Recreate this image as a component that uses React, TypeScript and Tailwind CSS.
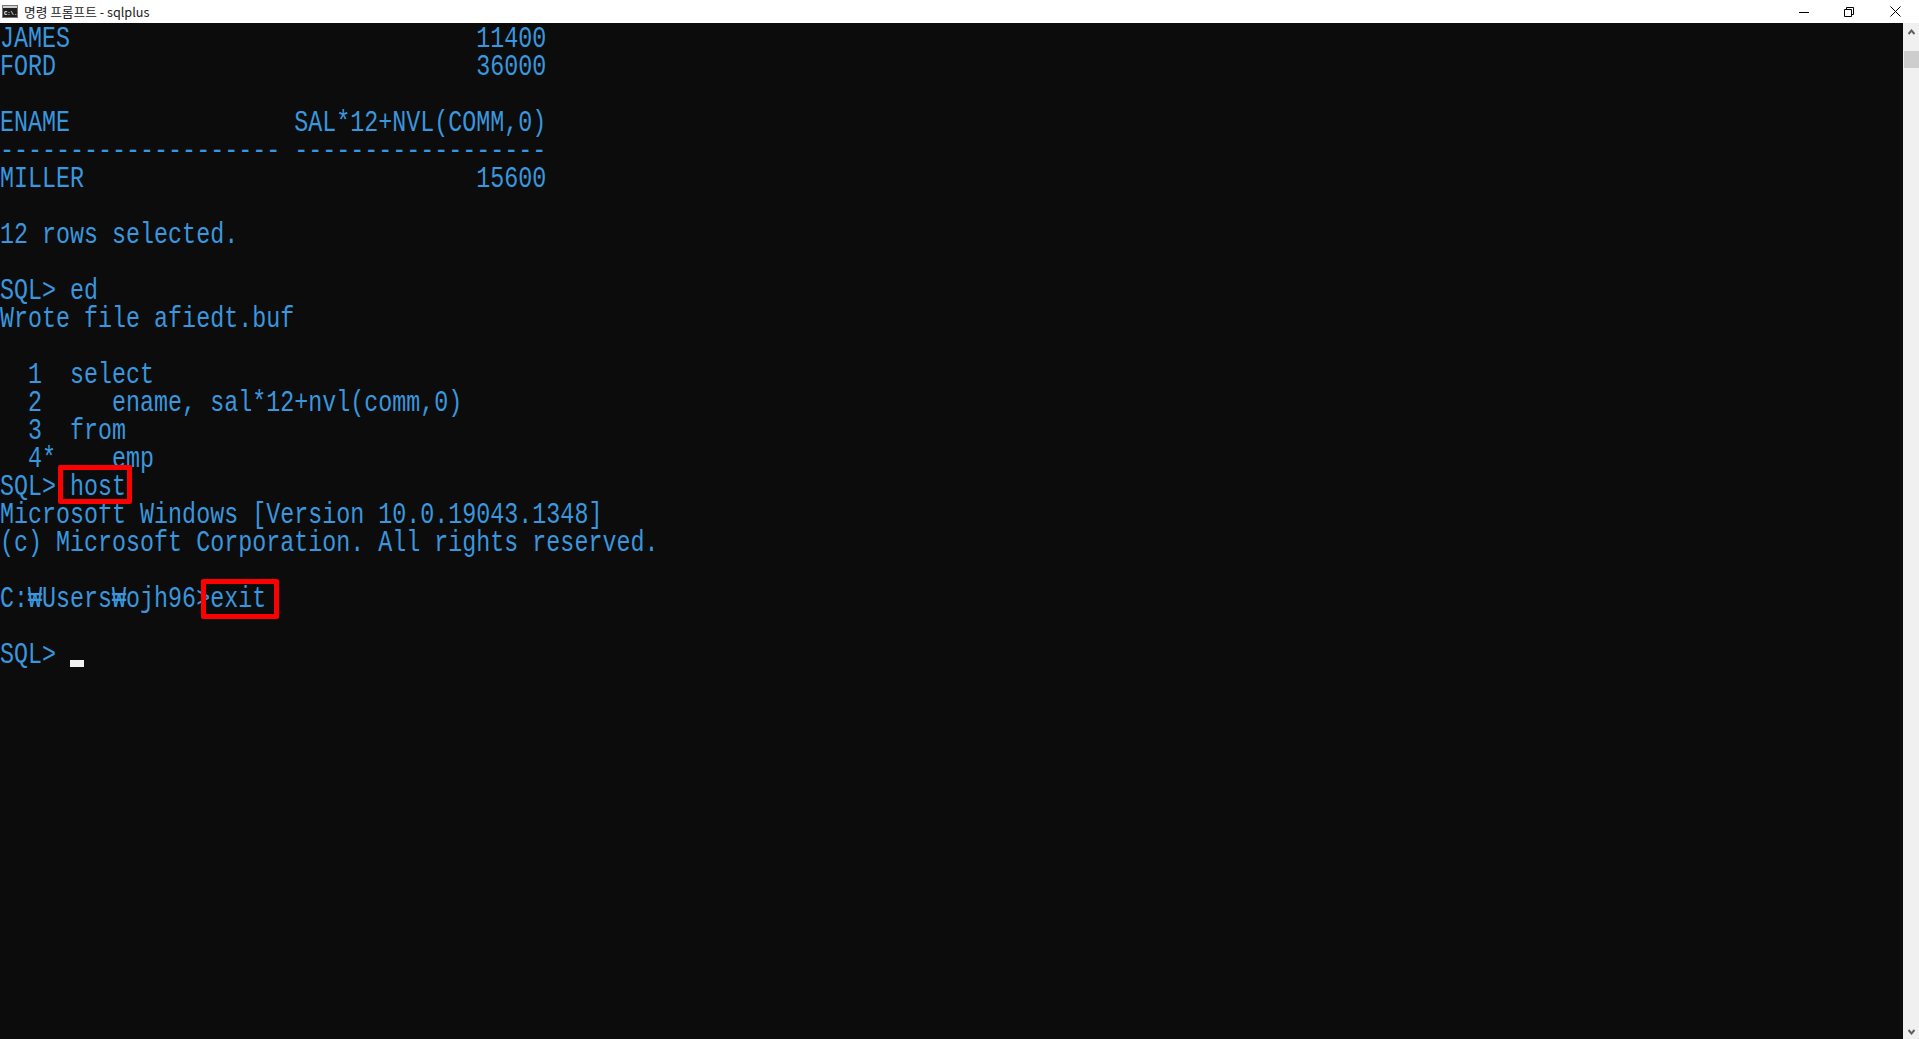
const lines = [
  'JAMES                             11400',
  'FORD                              36000',
  '',
  'ENAME                SAL*12+NVL(COMM,0)',
  '-------------------- ------------------',
  'MILLER                            15600',
  '',
  '12 rows selected.',
  '',
  'SQL> ed',
  'Wrote file afiedt.buf',
  '',
  '  1  select',
  '  2     ename, sal*12+nvl(comm,0)',
  '  3  from',
  '  4*    emp',
  'SQL> host',
  'Microsoft Windows [Version 10.0.19043.1348]',
  '(c) Microsoft Corporation. All rights reserved.',
  '',
  'C:₩Users₩ojh96>exit',
  '',
  'SQL> ',
]

function TitleBar() {
  return (
    <div className="flex h-[23px] items-center bg-white text-black">
      <svg width="16" height="13" viewBox="0 0 16 13" className="ml-[2px]" aria-hidden="true">
        <rect x="0.5" y="0.5" width="15" height="12" fill="#1e1e1e" stroke="#777" />
        <rect x="1" y="1" width="14" height="2" fill="#cfcfcf" />
        <text x="2" y="10" fontSize="5.5" fontWeight="700" fill="#fff" fontFamily="'Liberation Mono', monospace">C:\.</text>
      </svg>
      <span className="ml-[6px] text-[12.7px] leading-[23px] text-[#222] font-['Noto_Sans_CJK_KR',sans-serif]">명령 프롬프트 - sqlplus</span>
      <div className="ml-auto flex h-full items-center">
        <svg width="10" height="10" viewBox="0 0 10 10" className="mr-[35px]" aria-hidden="true">
          <path d="M0 5.5H10" stroke="#000" />
        </svg>
        <svg width="10" height="10" viewBox="0 0 10 10" className="mr-[36px]" aria-hidden="true">
          <path d="M0.5 2.5H7.5V9.5H0.5ZM2.5 2.5V0.5H9.5V7.5H7.5" fill="none" stroke="#000" />
        </svg>
        <svg width="11" height="11" viewBox="0 0 11 11" className="mr-[18px]" aria-hidden="true">
          <path d="M0.5 0.5L10.5 10.5M10.5 0.5L0.5 10.5" stroke="#000" />
        </svg>
      </div>
    </div>
  )
}

function Scrollbar() {
  return (
    <div className="flex w-4 flex-col items-center bg-[#f0f0f0]">
      <svg width="7" height="6" viewBox="0 0 7 6" className="mt-[6px]" aria-hidden="true">
        <path d="M0.5 5L3.5 1.5L6.5 5" fill="none" stroke="#606060" strokeWidth="2" />
      </svg>
      <div className="mt-[16px] h-[17px] w-[15px] self-end bg-[#cdcdcd]" />
      <svg width="7" height="6" viewBox="0 0 7 6" className="mt-auto mb-[4px]" aria-hidden="true">
        <path d="M0.5 1L3.5 4.5L6.5 1" fill="none" stroke="#606060" strokeWidth="2" />
      </svg>
    </div>
  )
}

export default function App() {
  return (
    <div className="flex h-screen flex-col overflow-hidden bg-[#0c0c0c]">
      <TitleBar />
      <div className="flex flex-1">
        <main className="relative flex-1 overflow-hidden pt-[3px]">
          {/* glyphs are taller than a normal mono font, so squeeze the line sideways */}
          <div className="scale-x-[0.805] whitespace-pre font-['Liberation_Mono','Noto_Sans_CJK_KR',monospace] text-[29px] leading-[28px] text-[#3a96dd] [transform-origin:0_0]">
            {lines.map((line, i) => (
              <div key={i} className="h-[28px]">{line}</div>
            ))}
          </div>
          {/* cursor */}
          <div className="absolute left-[70px] top-[637px] h-[7px] w-[14px] bg-[#f2f2f2]" />
          {/* red annotation boxes */}
          <div className="absolute left-[58px] top-[442px] h-[39px] w-[74px] rounded-[2px] border-[5px] border-[#ff0000]" />
          <div className="absolute left-[201px] top-[556px] h-[40px] w-[78px] rounded-[2px] border-[5px] border-[#ff0000]" />
        </main>
        <Scrollbar />
      </div>
    </div>
  )
}
